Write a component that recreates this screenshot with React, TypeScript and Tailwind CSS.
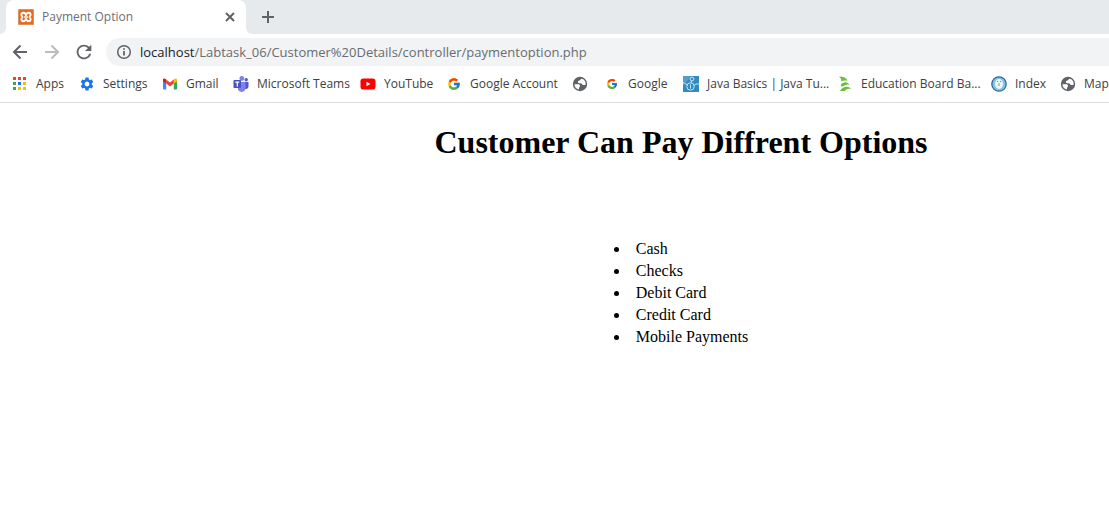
import type { ReactNode } from "react";
import { MdRefresh, MdSettings } from "react-icons/md";
import { FcGoogle } from "react-icons/fc";

function LineIcon({ d, children }: { d?: string; children?: ReactNode }) {
  return (
    <svg viewBox="0 0 20 20" className="size-5 shrink-0" fill="none" stroke="currentColor" strokeWidth="2">
      {d && <path d={d} />}
      {children}
    </svg>
  );
}

function AppsIcon() {
  const colors = ["#ea4335", "#ea4335", "#ea4335", "#34a853", "#1a73e8", "#fbbc04", "#34a853", "#fbbc04", "#fbbc04"];
  return (
    <svg viewBox="0 0 16 16" className="size-4 shrink-0" shapeRendering="crispEdges">
      {colors.map((c, i) => (
        <rect key={i} x={1 + (i % 3) * 5} y={1 + Math.floor(i / 3) * 5} width="3" height="3" fill={c} />
      ))}
    </svg>
  );
}

function GmailIcon() {
  return (
    <svg viewBox="0 0 16 16" className="size-4 shrink-0">
      <path fill="#4285f4" d="M1 4.5 4.2 7v6.6H2a1 1 0 0 1-1-1z" />
      <path fill="#34a853" d="M15 4.5 11.8 7v6.6H14a1 1 0 0 0 1-1z" />
      <path fill="#fbbc04" d="M11.8 3.6 13 2.8c.9-.6 2 0 2 1.1v1.3L11.8 7.6z" />
      <path fill="#c5221f" d="M4.2 3.6 3 2.8c-.9-.6-2 0-2 1.1v1.3L4.2 7.6z" />
      <path fill="#ea4335" d="M4.2 3.6 8 6.5l3.8-2.9v4L8 10.5 4.2 7.6z" />
    </svg>
  );
}

function TeamsIcon() {
  return (
    <svg viewBox="0 0 16 16" className="size-4 shrink-0">
      <circle cx="13.2" cy="3.8" r="1.7" fill="#5059c9" />
      <path fill="#5059c9" d="M11.5 6h4v4.5a2.5 2.5 0 0 1-4 2z" />
      <circle cx="8.8" cy="2.5" r="2.4" fill="#7b83eb" />
      <path fill="#7b83eb" d="M5 6h7.5v5.8a4 4 0 0 1-7.5 2z" />
      <rect x=".5" y="4" width="7.5" height="8" rx=".7" fill="#4b53bc" />
      <path stroke="#fff" strokeWidth="1.2" d="M2.3 6.2h4M4.3 6.200v4.200" />
    </svg>
  );
}

function YouTubeIcon() {
  return (
    <svg viewBox="0 0 16 16" className="size-4 shrink-0">
      <rect x=".5" y="2.5" width="15" height="11" rx="2.8" fill="#f00" />
      <path fill="#fff" d="m6.5 5.7 4 2.3-4 2.3z" />
    </svg>
  );
}

function GlobeIcon() {
  return (
    <svg viewBox="0 0 16 16" className="size-4 shrink-0">
      <circle cx="8" cy="8" r="7.2" fill="#5f6368" />
      <path
        fill="#fff"
        d="M9.7 2.7C8.3 3 8.6 4.2 7.4 4.5 6.2 4.8 5.9 5.3 5.9 6c0 1 .8 1.3 1.7 1.3h1.3c1 0 1 1.6 2.1 1.6h2.5c.7-2.900-1-5.500-3.800-6.200zM2.4 8.200h3.400c1.500 0 2.300.7 2.300 1.700 0 .8-.8.900-1 1.600l-.3 1.900C4.300 13 2.400 10.800 2.400 8.200z"
      />
    </svg>
  );
}

function JavaIcon() {
  return (
    <svg viewBox="0 0 16 16" className="size-4 shrink-0">
      <rect width="16" height="16" fill="#318bc0" />
      <path fill="#579fc6" d="M0 0h8L0 10z" />
      <g fill="none" stroke="#c9e3f1">
        <circle cx="7.5" cy="10.5" r="3.7" />
        <circle cx="9" cy="3" r="1.9" />
        <path d="m8.500 5-.5 2M0 6.500l2 1 2 1.500M11 9.500l2-1.500h3M7.500 8.500v4" />
      </g>
    </svg>
  );
}

function EducationIcon() {
  return (
    <svg viewBox="0 0 16 16" className="size-4 shrink-0" fill="#6abf40">
      <path d="M2 .5c4.500 0 7.500 1.300 8.500 4.300C8 4 6 4.500 4 5.500 5 3.500 3.500 2 2 .5z" />
      <path d="M3.500 9.200C5.500 6 9.500 4.800 12.500 8.400c-3 0-5 .4-7.500 2.400z" />
      <path d="M3 15c2-4 7-5.800 11.200-2.500-3.200 0-5 .7-6.500 2.500z" />
    </svg>
  );
}

function IndexIcon() {
  return (
    <svg viewBox="0 0 16 16" className="size-4 shrink-0">
      <circle cx="8" cy="8" r="7.2" fill="#82c4e5" stroke="#326b94" strokeWidth="1.3" />
      <ellipse cx="8" cy="8" rx="4" ry="5" fill="#edf5f8" />
      <path d="M6 5.500h1.200M9 5.500h1.200M7.200 8h1.600M7.500 9.500h1" stroke="#7a858d" fill="none" />
    </svg>
  );
}

function XamppIcon() {
  return (
    <svg viewBox="0 0 16 16" className="size-4 shrink-0">
      <rect width="16" height="16" rx="1.5" fill="#e56a20" />
      <rect x=".5" y=".5" width="15" height="15" rx="1.5" fill="none" stroke="#d99163" />
      <path
        fill="none"
        stroke="#fff"
        strokeWidth="1.900"
        strokeLinejoin="round"
        d="M8 6.200C7.600 4.600 6.800 3.800 5.500 3.800c-1.300 0-2.100.9-2.100 2 0 .9.500 1.500 1.100 2.200-.6.700-1.100 1.300-1.100 2.200 0 1.100.8 2 2.100 2 1.300 0 2.100-.8 2.500-2.400.4 1.600 1.200 2.400 2.500 2.400 1.300 0 2.100-.9 2.100-2 0-.9-.5-1.500-1.100-2.200.6-.7 1.100-1.300 1.100-2.200 0-1.100-.8-2-2.100-2C9.200 3.800 8.400 4.600 8 6.200z"
      />
      <path stroke="#fff" strokeWidth="1.400" d="M6 8h4" />
    </svg>
  );
}

const bookmarks: { label: string; icon: ReactNode; width: string }[] = [
  { label: "Apps", icon: <AppsIcon />, width: "w-[67px]" },
  { label: "Settings", icon: <MdSettings className="size-4 shrink-0 text-[#1a73e8]" />, width: "w-[83px]" },
  { label: "Gmail", icon: <GmailIcon />, width: "w-[71px]" },
  { label: "Microsoft Teams", icon: <TeamsIcon />, width: "w-[127px]" },
  { label: "YouTube", icon: <YouTubeIcon />, width: "w-[86px]" },
  { label: "Google Account", icon: <FcGoogle className="size-4 shrink-0 p-px" />, width: "w-[126px]" },
  { label: "", icon: <GlobeIcon />, width: "w-8" },
  { label: "Google", icon: <FcGoogle className="size-4 shrink-0 p-0.5" />, width: "w-[79px]" },
  { label: "Java Basics | Java Tu...", icon: <JavaIcon />, width: "w-[154px]" },
  { label: "Education Board Ba...", icon: <EducationIcon />, width: "w-[154px]" },
  { label: "Index", icon: <IndexIcon />, width: "w-[69px]" },
  { label: "Maps", icon: <GlobeIcon />, width: "w-[67px]" },
];

const options = ["Cash", "Checks", "Debit Card", "Credit Card", "Mobile Payments"];

export default function App() {
  return (
    <div className="min-h-screen overflow-hidden bg-white font-['Open_Sans',sans-serif]">
      <header className="border-b border-[#dadce0]">
        <div className="flex h-[34px] items-stretch bg-[#e7eaed]">
          <div className="w-1.5 bg-white">
            <div className="h-full rounded-br-md bg-[#e7eaed]" />
          </div>
          <div className="flex w-60 items-center rounded-t-lg bg-white pr-1.5 pl-3">
            <XamppIcon />
            <span className="ml-2 flex-1 text-[12px] text-[#6b6f74]">Payment Option</span>
            <button type="button" aria-label="Close tab" className="text-[#5f6368]">
              <LineIcon d="m6 6 8 8M14 6l-8 8" />
            </button>
          </div>
          <div className="flex flex-1 bg-white">
            <div className="flex flex-1 items-center rounded-bl-md bg-[#e7eaed] pl-3">
              <button type="button" aria-label="New tab" className="text-[#5f6368]">
                <LineIcon d="M10 4v12M4 10h12" />
              </button>
            </div>
          </div>
        </div>
        <div className="flex items-center gap-3 pt-1 pl-2.5">
          <button type="button" aria-label="Back" className="text-[#5f6368]">
            <LineIcon d="M17 10H4.500M10.500 3.500 4 10l6.500 6.500" />
          </button>
          <button type="button" aria-label="Forward" className="text-[#babcbe]">
            <LineIcon d="M3 10h12.500M9.500 3.500 16 10l-6.500 6.500" />
          </button>
          <button type="button" aria-label="Reload" className="text-[#5f6368]">
            <MdRefresh className="size-[22px] -m-px" />
          </button>
          <div className="flex h-7 flex-1 items-center rounded-l-full bg-[#f1f3f4] pl-2">
            <span className="text-[#5f6368]">
              <LineIcon>
                <circle cx="10" cy="10" r="6.300" strokeWidth="1.500" />
                <path d="M10 9v4.500M10 6.200v1.600" strokeWidth="1.800" />
              </LineIcon>
            </span>
            <a href="#" className="ml-1.5 pt-0.5 text-[13px] text-[#696c70]">
              <span className="text-[#202124]">localhost</span>/Labtask_06/Customer%20Details/controller/paymentoption.php
            </a>
          </div>
        </div>
        <nav aria-label="Bookmarks" className="flex h-9 items-center pl-3">
          {bookmarks.map((b, i) => (
            <a
              key={i}
              href="#"
              aria-label={b.label || "Bookmark"}
              className={`flex shrink-0 items-center gap-2 whitespace-nowrap text-[12px] text-[#3c4043] ${b.width}`}
            >
              {b.icon}
              {b.label}
            </a>
          ))}
        </nav>
      </header>
      <main className="flex flex-col items-center pt-[19px] pl-[253px] font-['Liberation_Serif',serif] text-black">
        <h1 className="text-[32px] leading-10 font-bold">Customer Can Pay Diffrent Options</h1>
        <ul className="mt-[76px] list-inside list-disc text-[16px] leading-[22px]">
          {options.map((o) => (
            <li key={o}>{o}</li>
          ))}
        </ul>
      </main>
    </div>
  );
}
